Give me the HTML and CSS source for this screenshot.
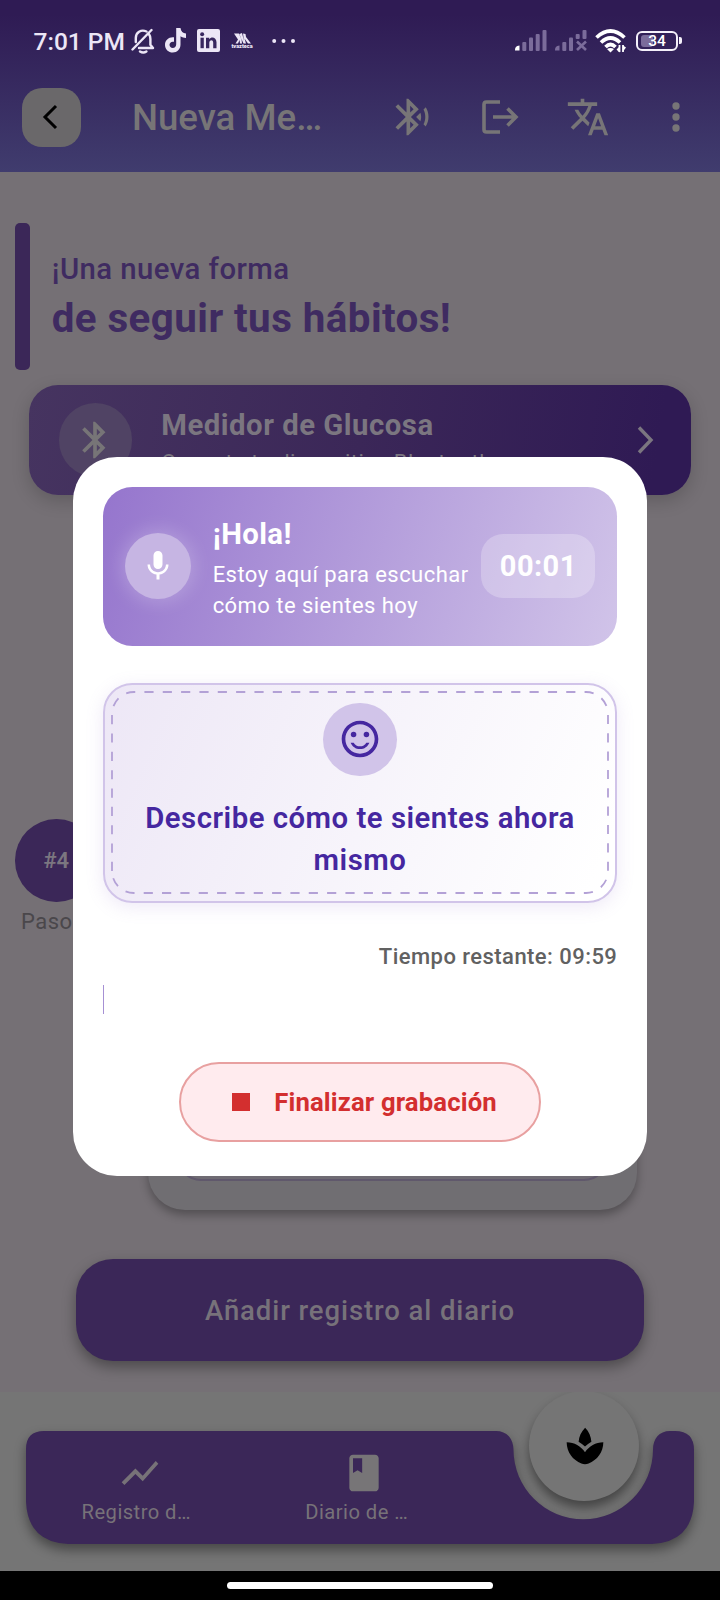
FILE: index.html
```html
<!DOCTYPE html>
<html lang="es">
<head>
<meta charset="utf-8">
<title>Nueva Medición</title>
<link rel="stylesheet" href="styles.css">
</head>
<body>
<div class="screen">
  <header class="top">
    <div class="status">
      <span class="clock">7:01 PM</span>
      <svg class="s-bell" width="24" height="26" viewBox="0 0 24 26" fill="none" stroke="#ece6f6" stroke-width="2.4" stroke-linecap="round" stroke-linejoin="round"><path d="M1.500 21.500L20.500 2M8 20h14l-2.600-3.200V11c0-2-.5-3.600-1.500-5M15.500 3.500C10 1 4.800 4.500 4.800 10v4"/><path d="M9 23.500q3.200 2 6.400 0"/></svg>
      <svg class="s-tiktok" width="22" height="25" viewBox="0 0 22 25"><path d="M11.200 0h4.300c.4 3.400 2.400 5.300 5.500 5.600v4.300c-2 0-3.900-.6-5.500-1.700v8.300c0 4.600-3.400 8-7.700 8S0 21.200 0 16.900c0-4.900 4.100-8.300 9-7.600v4.500c-2.600-.7-4.500.9-4.500 3 0 1.900 1.400 3.300 3.200 3.300 2.100 0 3.500-1.500 3.500-3.800z" fill="#ece6f6"/></svg>
      <svg class="s-linkedin" width="23" height="23" viewBox="0 0 23 23"><rect width="23" height="23" rx="2" fill="#ece6f6"/><g fill="#38265f"><rect x="3.500" y="8.700" width="3.300" height="10.500"/><circle cx="5.150" cy="5.200" r="2"/><path d="M9 8.700h3.200v1.500c2-3 7.300-2.200 7.300 3v6h-3.300v-5.400c0-3.400-3.900-3.200-3.900 0v5.400H9z"/></g></svg>
      <span class="s-tv">
        <svg width="18" height="11" viewBox="0 0 18 11" fill="#ece6f6"><path d="M1 .5h5L9 8 6.500 1 9 0l2 8-1-7.500L12.500 1 13 4l5 6.500h-3l-3.500-5 1.500 5h-2.500L8.500 6l.5 4.500H7L6.500 7 5 10.500H2.500L5 6.500z"/></svg>
        <span>tvazteca</span>
      </span>
      <svg class="s-dots" width="24" height="6" viewBox="0 0 24 6" fill="#ece6f6"><circle cx="2.200" cy="3" r="2"/><circle cx="11.500" cy="3" r="2"/><circle cx="21" cy="3" r="2"/></svg>
      <span class="grow"></span>
      <svg class="s-sig" width="32" height="21" viewBox="0 0 32 21" fill="#7b6c9b"><path d="M0 20.500c0-3 1-4.500 4.500-5v5z" fill="#fff"/><rect x="7.300" y="12" width="4" height="9" rx="1"/><rect x="14" y="7.500" width="4" height="13.500" rx="1"/><rect x="20.700" y="4" width="4" height="17" rx="1"/><rect x="27.500" y="0" width="4" height="21" rx="1"/></svg>
      <svg class="s-sig2" width="33" height="21" viewBox="0 0 33 21" fill="#7b6c9b"><path d="M0 20.500c0-3 1-4.500 4.500-5v5z"/><rect x="7.300" y="12" width="4" height="9" rx="1"/><rect x="14" y="7.500" width="4" height="13.500" rx="1"/><rect x="20.700" y="4" width="4" height="5" rx="1"/><rect x="27.500" y="0" width="4" height="9" rx="1"/><path d="M22 11.500l9 8.500M31 11.500l-9 8.500" stroke="#7b6c9b" stroke-width="2.600"/></svg>
      <svg class="s-wifi" width="32" height="24" viewBox="0 0 32 24" fill="none" stroke="#fff" stroke-width="3.700"><path d="M1.500 8.500Q15.500-4.500 29.500 8.500M6 13.500Q15.500 4.500 25 13.500M10.500 18Q15.500 13 20.500 18"/><path d="M12 20q3.500-2 7 0L15.500 23.500z" fill="#fff" stroke="none"/><path d="M24.500 16v7M28 16v7" stroke-width="1.800"/><path d="M21.500 20.500l3-3v6zM31 18.500l-3-2v6z" fill="#fff" stroke="none"/></svg>
      <span class="battery"><i class="charge"></i><b>34</b></span>
      <i class="cap"></i>
    </div>
    <div class="appbar">
      <span class="back"><svg width="20" height="28" viewBox="0 0 20 28" fill="none" stroke="#000" stroke-width="3"><path d="M15 3L4 14l11 11"/></svg></span>
      <h1>Nueva Me…</h1>
      <nav class="actions">
        <svg width="44" height="44" viewBox="0 0 24 24" fill="#777577"><path d="M14.240 12.010l2.320 2.320c.28-.72.44-1.510.44-2.330 0-.82-.16-1.590-.43-2.310l-2.330 2.320zm5.290-5.300l-1.260 1.260c.63 1.210.98 2.570.98 4.020s-.36 2.820-.98 4.020l1.200 1.200c.97-1.540 1.540-3.360 1.540-5.310-.01-1.890-.55-3.670-1.480-5.190zm-3.820 1L10 2H9v7.590L4.410 5 3 6.410 8.590 12 3 17.590 4.410 19 9 14.410V22h1l5.710-5.710-4.300-4.290 4.300-4.290zM11 5.830l1.880 1.880L11 9.590V5.830zm1.880 10.460L11 18.170v-3.760l1.880 1.880z"/></svg>
        <svg width="44" height="44" viewBox="0 0 44 44" fill="none" stroke="#777577" stroke-width="3.600"><path d="M22 7H8.500Q6 7 6 9.500v25Q6 37 8.500 37H22M15 22h22M29.500 13.500L38 22l-8.500 8.500"/></svg>
        <svg width="44" height="44" viewBox="0 0 24 24" fill="#777577"><path d="M12.870 15.070l-2.540-2.510.03-.03c1.740-1.940 2.980-4.170 3.710-6.530H17V4h-7V2H8v2H1v1.990h11.170C11.500 7.920 10.440 9.750 9 11.350 8.070 10.320 7.300 9.190 6.690 8h-2c.73 1.630 1.730 3.170 2.980 4.560l-5.090 5.020L4 19l5-5 3.110 3.110.76-2.040zM18.500 10h-2L12 22h2l1.120-3h4.750L21 22h2l-4.500-12zm-2.620 7l1.620-4.330L19.120 17h-3.240z"/></svg>
        <svg width="44" height="44" viewBox="0 0 24 24" fill="#777577"><circle cx="12" cy="6" r="2"/><circle cx="12" cy="12" r="2"/><circle cx="12" cy="18" r="2"/></svg>
      </nav>
    </div>
  </header>

  <main class="content">
    <section class="hero">
      <i class="hero-bar"></i>
      <div>
        <p class="hero-small">¡Una nueva forma</p>
        <p class="hero-big">de seguir tus hábitos!</p>
      </div>
    </section>
    <section class="device">
      <span class="device-icon"><svg width="44" height="44" viewBox="0 0 24 24" fill="#777577"><path d="M17.710 7.710L12 2h-1v7.590L6.410 5 5 6.410 10.590 12 5 17.590 6.410 19 11 14.410V22h1l5.710-5.710-4.300-4.290 4.300-4.290zM13 5.830l1.880 1.880L13 9.590V5.830zm1.880 10.460L13 18.170v-3.760l1.880 1.880z"/></svg></span>
      <div class="device-text"><h2>Medidor de Glucosa</h2><p>Conecta tu dispositivo Bluetooth</p></div>
      <svg width="20" height="30" viewBox="0 0 20 30" fill="none" stroke="#7b7680" stroke-width="3.400"><path d="M4 2.500L16 15 4 27.500"/></svg>
    </section>
    <section class="steps">
      <span class="step-dot">#4</span>
      <span class="step-label">Paso 4</span>
    </section>
    <section class="form-card"><div class="form-inner"></div></section>
    <button class="add">Añadir registro al diario</button>
  </main>

  <footer class="bottom">
    <svg class="bar-shape" width="668" height="113" viewBox="0 0 668 113"><path d="M18 0H470C481 0 487.500 8 487.500 18.500A69.500 69.500 0 0 0 627 18.500C627 8 633 0 644 0h5Q668 0 668 19V71Q666 111 626 113H42Q2 111 0 71V18Q0 0 18 0z" fill="#3b2758"/></svg>
    <div class="tabs">
      <div class="tab tab-log"><svg width="44" height="44" viewBox="0 0 24 24" fill="#777278"><path d="M3.500 18.490l6-6.010 4 4L22 6.920l-1.410-1.410-7.090 7.970-4-4L2 16.990z"/></svg><span>Registro d…</span></div>
      <div class="tab tab-diary"><svg width="44" height="44" viewBox="0 0 24 24" fill="#777577"><path d="M18 2H6c-1.100 0-2 .9-2 2v16c0 1.100.9 2 2 2h12c1.100 0 2-.9 2-2V4c0-1.100-.9-2-2-2zM6 4h5v8l-2.500-1.500L6 12V4z"/></svg><span>Diario de …</span></div>
    </div>
    <span class="fab"><svg width="44" height="44" viewBox="0 0 24 24"><path d="M8.550 12c-1.070-.71-2.250-1.270-3.530-1.610 1.280.34 2.460.9 3.530 1.610zm10.430-1.610c-1.290.34-2.490.91-3.570 1.640 1.080-.73 2.280-1.300 3.570-1.640z"/><path d="M15.490 9.630c-.18-2.790-1.310-5.510-3.430-7.630-2.140 2.140-3.320 4.860-3.550 7.630 1.280.68 2.460 1.560 3.490 2.630 1.030-1.060 2.210-1.940 3.490-2.630zm-3.490 5.820C9.850 12.170 6.180 10 2 10c0 5.320 3.360 9.820 8.030 11.490.63.23 1.290.4 1.970.51.68-.12 1.330-.29 1.970-.51C18.640 19.820 22 15.320 22 10c-4.180 0-7.850 2.170-10 5.450z"/></svg></span>
  </footer>
  <div class="system"><i></i></div>

  <div class="dialog">
    <section class="hello">
      <span class="mic"><svg width="36" height="36" viewBox="0 0 24 24" fill="#fff"><path d="M12 14c1.660 0 2.990-1.340 2.990-3L15 5c0-1.660-1.340-3-3-3S9 3.340 9 5v6c0 1.660 1.340 3 3 3zm5.300-3c0 3-2.540 5.100-5.300 5.100S6.700 14 6.700 11H5c0 3.410 2.720 6.230 6 6.720V21h2v-3.280c3.280-.48 6-3.300 6-6.720h-1.700z"/></svg></span>
      <div class="hello-text"><h2>¡Hola!</h2><p>Estoy aquí para escuchar<br>cómo te sientes hoy</p></div>
      <span class="timer">00:01</span>
    </section>
    <section class="prompt">
      <svg class="dashes" width="514" height="220" viewBox="0 0 514 220" fill="none" stroke="#b3a1d6" stroke-width="1.800"><path d="M9 188V31A22 22 0 0 1 31 9H483A22 22 0 0 1 505 31V188A22 22 0 0 1 483 210H31A22 22 0 0 1 9 188" stroke-dasharray="9.170 9.170"/></svg>
      <span class="smile"><svg width="44" height="44" viewBox="0 0 24 24" fill="#4527a0"><circle cx="15.500" cy="9.500" r="1.500"/><circle cx="8.500" cy="9.500" r="1.500"/><path d="M11.990 2C6.470 2 2 6.480 2 12s4.470 10 9.990 10C17.520 22 22 17.520 22 12S17.520 2 11.990 2zM12 20c-4.420 0-8-3.580-8-8s3.580-8 8-8 8 3.580 8 8-3.580 8-8 8zm0-4c-1.480 0-2.750-.81-3.450-2H6.880c.8 2.050 2.790 3.500 5.120 3.500s4.320-1.450 5.120-3.500h-1.670c-.7 1.190-1.970 2-3.450 2z"/></svg></span>
      <p>Describe cómo te sientes ahora<br>mismo</p>
    </section>
    <p class="remaining">Tiempo restante: 09:59</p>
    <div class="caret"></div>
    <button class="stop"><i></i><span>Finalizar grabación</span></button>
  </div>
</div>
</body>
</html>
```
FILE: styles.css
```css
* { box-sizing: border-box; }
body, h1, h2, p { margin: 0; }
body { font-family: Roboto, "Liberation Sans", sans-serif; }
button { font-family: inherit; padding: 0; border: 0; }
svg { display: block; flex: none; }

.screen {
  position: relative;
  width: 720px;
  height: 1600px;
  overflow: hidden;
  display: flex;
  flex-direction: column;
  background: #757075;
}

.top {
  height: 172px;
  background: linear-gradient(#2f1b54 0, #2f1b54 14px, #403c6e 100%);
}
.status {
  height: 80px;
  padding: 1px 0 0 33.500px;
  display: flex;
  align-items: center;
}
.clock {
  width: 97px;
  font-size: 24.500px;
  font-weight: 500;
  line-height: 30px;
  color: #ece6f6;
  white-space: nowrap;
  margin-top: 2px;
}
.s-tiktok { margin-left: 10px; }
.s-linkedin { margin-left: 10.500px; }
.s-tv {
  width: 24px;
  margin-left: 10px;
  display: flex;
  flex-direction: column;
  align-items: center;
}
.s-tv span {
  font-size: 5.500px;
  font-weight: 900;
  line-height: 5px;
  color: #ece6f6;
}
.s-dots { margin-left: 18px; }
.grow { flex: 1; }
.s-sig2 { margin-left: 8px; }
.s-wifi { margin-left: 7px; }
.battery {
  position: relative;
  width: 42px;
  height: 20px;
  margin-left: 9px;
  border: 2px solid #f4f0fa;
  border-radius: 6px;
  display: flex;
  align-items: center;
  justify-content: center;
}
.battery b {
  position: relative;
  font-size: 15.500px;
  font-weight: 500;
  line-height: 18px;
  color: #fff;
}
.charge {
  position: absolute;
  left: 3px;
  top: 2px;
  width: 12px;
  height: 12px;
  border-radius: 3px;
  background: #7b6c9b;
}
.cap {
  width: 3px;
  height: 7px;
  margin: 0 38px 0 1px;
  border-radius: 0 2px 2px 0;
  background: #f4f0fa;
}

.appbar {
  height: 74px;
  padding: 0 22px;
  display: flex;
  align-items: center;
}
.back {
  width: 59px;
  height: 59px;
  border-radius: 20px;
  background: #6a686a;
  display: flex;
  align-items: center;
  justify-content: center;
}
.appbar h1 {
  width: 258.500px;
  margin: 2px 0 0 51px;
  font-size: 36.670px;
  font-weight: 500;
  line-height: 44px;
  color: #777577;
  white-space: nowrap;
}
.actions {
  display: flex;
  gap: 44px;
}

.content {
  height: 1220px;
  display: flex;
  flex-direction: column;
}
.hero {
  height: 147px;
  margin: 51px 15px 0;
  display: flex;
  gap: 22px;
  padding-right: 15px;
  color: #3f2b61;
  white-space: nowrap;
}
.hero-bar {
  width: 14.670px;
  border-radius: 5px;
  background: #3b2758;
}
.hero-small {
  margin-top: 28px;
  font-size: 29.330px;
  font-weight: 500;
  line-height: 36px;
  letter-spacing: 0.450px;
}
.hero-big {
  margin-top: 7.500px;
  font-size: 40.330px;
  font-weight: 700;
  line-height: 48px;
  letter-spacing: 0.430px;
}
.device {
  height: 110px;
  margin: 15px 29.330px 0;
  padding: 0 36px 0 29.330px;
  border-radius: 29px;
  background: linear-gradient(99.400deg, #463460, #3b2758 50%, #2f1a54 94%);
  box-shadow: 0 6px 18px rgba(0, 0, 0, 0.180);
  display: flex;
  align-items: center;
}
.device-icon {
  width: 73.330px;
  height: 73.330px;
  border-radius: 50%;
  background: #504364;
  display: flex;
  align-items: center;
  justify-content: center;
}
.device-text {
  flex: 1;
  margin: 4px 0 0 29.330px;
  color: #7b7680;
  white-space: nowrap;
}
.device h2 {
  font-size: 29.330px;
  font-weight: 700;
  line-height: 36px;
  letter-spacing: 0.500px;
}
.device p {
  font-size: 22px;
  line-height: 30px;
  margin-top: 5px;
  letter-spacing: 0.400px;
}
.steps {
  height: 250px;
  margin: 324px 15px 0;
  display: flex;
  flex-direction: column;
  align-items: flex-start;
}
.step-dot {
  width: 82.500px;
  height: 82.500px;
  border-radius: 50%;
  background: #3b2758;
  color: #7b7680;
  font-size: 22px;
  font-weight: 600;
  display: flex;
  align-items: center;
  justify-content: center;
}
.step-label {
  margin: 6px 0 0 6px;
  font-size: 22px;
  line-height: 28px;
  letter-spacing: 0.500px;
  color: #4a474b;
}
.form-card {
  width: 489px;
  height: 141px;
  margin-left: 148px;
  padding: 0 29px 29.500px;
  border-radius: 0 0 37px 37px;
  background: #706e72;
  box-shadow: 0 5px 10px rgba(0, 0, 0, 0.300);
  display: flex;
}
.form-inner {
  flex: 1;
  border: 2px solid #60586c;
  border-radius: 24px;
  background: #6f6b73;
}
.add {
  width: 568px;
  height: 102px;
  margin: 49px 0 0 76px;
  border-radius: 37px;
  background: #3b2758;
  box-shadow: 0 6px 14px rgba(0, 0, 0, 0.350);
  color: #77727a;
  font-size: 27.500px;
  font-weight: 500;
  letter-spacing: 0.900px;
}

.bottom {
  position: relative;
  height: 179px;
  padding: 39px 26px 0;
  background: #757575;
}
.bar-shape {
  position: absolute;
  left: 26px;
  top: 39px;
  overflow: visible;
  filter: drop-shadow(0 6px 6px rgba(0, 0, 0, 0.400));
}
.tabs {
  position: relative;
  display: flex;
  padding: 20px 0 0 2.500px;
}
.tab {
  width: 223.500px;
  display: flex;
  flex-direction: column;
  align-items: center;
  color: #777278;
}
.tab span {
  margin-top: 5px;
  font-size: 20.170px;
  line-height: 24px;
  letter-spacing: 0.450px;
}
.tab-log span { margin-right: 8px; }
.tab-diary span { margin-right: 14px; }
.fab {
  position: absolute;
  left: 528.500px;
  top: -1px;
  width: 110px;
  height: 110px;
  padding-left: 2px;
  border-radius: 50%;
  background: #757575;
  box-shadow: 0 7px 11px rgba(0, 0, 0, 0.420);
  clip-path: inset(1px -30px -30px -30px);
  display: flex;
  align-items: center;
  justify-content: center;
}
.system {
  height: 29px;
  background: #000;
  display: flex;
  align-items: center;
  justify-content: center;
}
.system i {
  width: 266px;
  height: 7px;
  border-radius: 4px;
  background: #fff;
}

.dialog {
  position: absolute;
  left: 73.330px;
  top: 457px;
  width: 573.330px;
  height: 718.500px;
  padding: 29.670px 29.330px;
  border-radius: 44px;
  background: #fff;
  display: flex;
  flex-direction: column;
}
.hello {
  height: 159px;
  padding: 0 22px;
  border-radius: 29.330px;
  background: linear-gradient(107.200deg, #9575cd, #d1c4e9);
  color: #fff;
  display: flex;
  align-items: center;
}
.mic {
  width: 66px;
  height: 66px;
  border-radius: 50%;
  background: #c6b5e3;
  box-shadow: 0 0 18px 4px rgba(255, 255, 255, 0.200);
  display: flex;
  align-items: center;
  justify-content: center;
}
.hello-text {
  flex: 1;
  margin: 6px 0 0 22px;
  white-space: nowrap;
}
.hello h2 {
  font-size: 29.330px;
  font-weight: 700;
  line-height: 34px;
  letter-spacing: 0.350px;
}
.hello p {
  margin-top: 9px;
  font-size: 22px;
  line-height: 30.800px;
  letter-spacing: 0.450px;
}
.timer {
  width: 114px;
  height: 64px;
  border-radius: 22px;
  background: rgba(255, 255, 255, 0.250);
  font-size: 29px;
  font-weight: 700;
  letter-spacing: 0.450px;
  display: flex;
  align-items: center;
  justify-content: center;
}
.prompt {
  position: relative;
  height: 220px;
  margin-top: 37px;
  padding-top: 18px;
  border: 2px solid #d1c4e9;
  border-radius: 29.330px;
  background: linear-gradient(113.200deg, #ede7f6, #fff 95%);
  box-shadow: 0 4px 18px rgba(149, 117, 205, 0.160);
  display: flex;
  flex-direction: column;
  align-items: center;
}
.dashes {
  position: absolute;
  left: -2px;
  top: -1.500px;
}
.smile {
  width: 73.330px;
  height: 73.330px;
  border-radius: 50%;
  background: #d1c4e9;
  display: flex;
  align-items: center;
  justify-content: center;
}
.prompt p {
  margin-top: 21.500px;
  font-size: 29.330px;
  font-weight: 600;
  line-height: 42px;
  letter-spacing: 0.500px;
  text-align: center;
  color: #4527a0;
  white-space: nowrap;
}
.remaining {
  margin-top: 39px;
  font-size: 22px;
  font-weight: 500;
  line-height: 30px;
  letter-spacing: 0.450px;
  text-align: right;
  color: #616161;
}
.caret {
  width: 1.500px;
  height: 29px;
  margin-top: 13.500px;
  background: #a690d4;
}
.stop {
  width: 362px;
  height: 80.670px;
  margin: 47.500px auto 0;
  padding-left: 51px;
  border: 2px solid #e8a0a0;
  border-radius: 41px;
  background: #ffebee;
  display: flex;
  align-items: center;
  color: #d32f2f;
  font-size: 25.670px;
  font-weight: 700;
  letter-spacing: 0.150px;
  white-space: nowrap;
}
.stop i {
  width: 18.300px;
  height: 18.300px;
  margin-right: 24px;
  background: #d32f2f;
}
```
